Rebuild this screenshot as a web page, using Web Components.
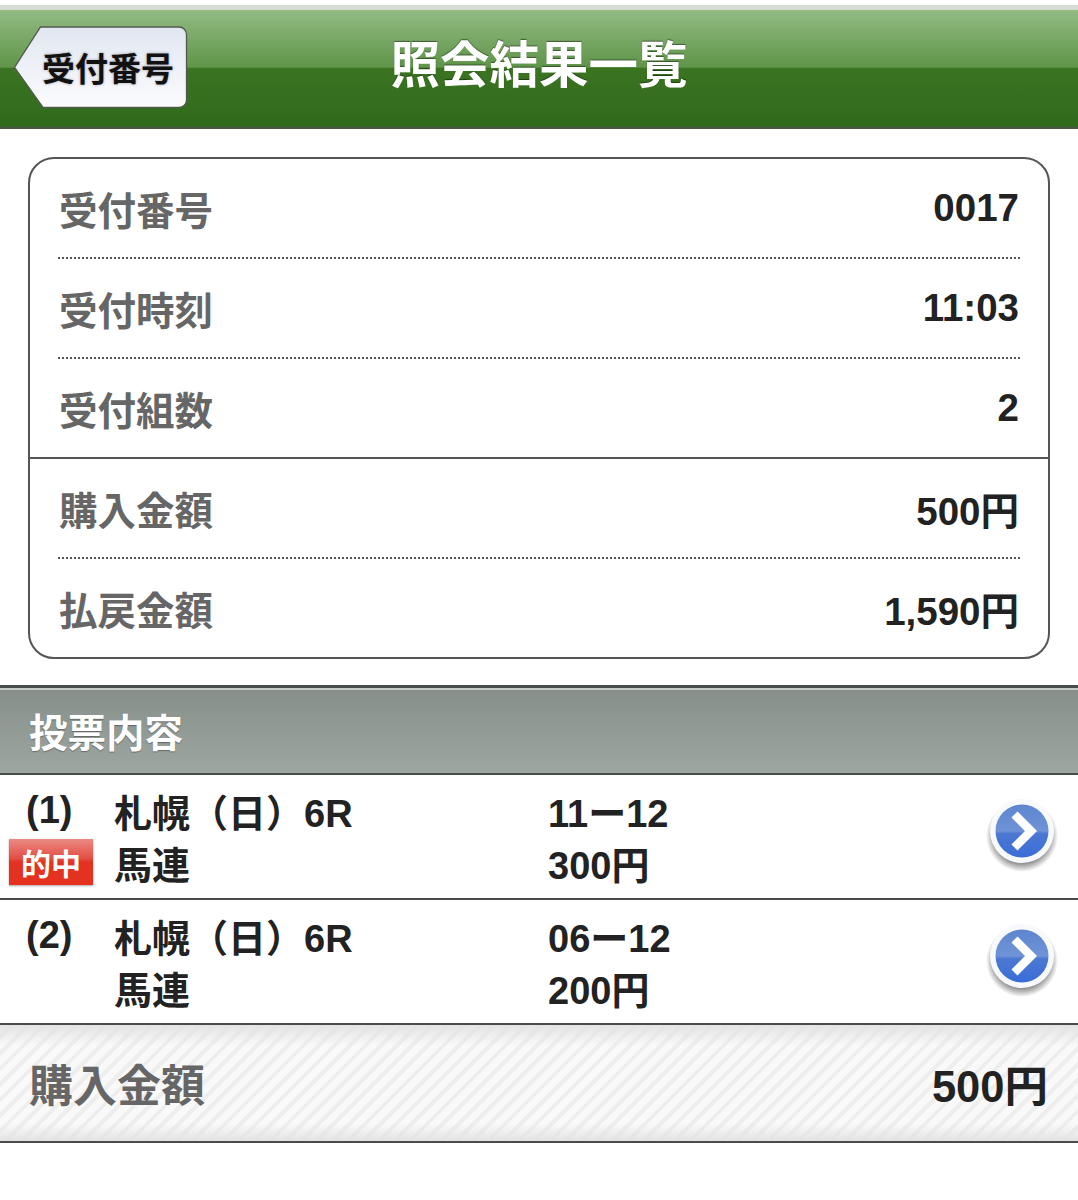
<!DOCTYPE html>
<html lang="ja">
<head>
<meta charset="utf-8">
<title>照会結果一覧</title>
<style>
    html, body { margin: 0; background: #fff; }
    body {
        font-family: "Liberation Sans", "Noto Sans CJK JP", sans-serif;
        font-weight: 700;
    }
</style>
</head>
<body>
<nav-bar back="受付番号">照会結果一覧</nav-bar>
<info-card>
    <info-row label="受付番号" sep="dot">0017</info-row>
    <info-row label="受付時刻" sep="dot">11:03</info-row>
    <info-row label="受付組数" sep="solid">2</info-row>
    <info-row label="購入金額" sep="dot">500円</info-row>
    <info-row label="払戻金額">1,590円</info-row>
</info-card>
<section-title>投票内容</section-title>
<ticket-row num="(1)" place="札幌（日）6R" kind="馬連" combo="11ー12" amount="300円" hit></ticket-row>
<ticket-row num="(2)" place="札幌（日）6R" kind="馬連" combo="06ー12" amount="200円"></ticket-row>
<total-bar label="購入金額">500円</total-bar>

<script>
class NavBar extends HTMLElement {
    constructor() {
        super();
        this.shadow = this.attachShadow({ mode: "open" });
    }
    connectedCallback() {
        this.shadow.innerHTML = /*html*/`
        <style>
            :host { display: block; padding-top: 5px; }
            .top { height: 5px; background: #d5dcd3; }
            .bar {
                position: relative;
                height: 117px;
                display: flex;
                align-items: center;
                justify-content: center;
                border-bottom: 2px solid #4a5547;
                background: linear-gradient(#93bb84 0, #5f9549 49%, #3b7421 49.5%, #2f6a1c 100%);
            }
            h1 {
                margin: 0 0 5px;
                font-size: 49.5px;
                line-height: 60px;
                color: #fff;
                text-shadow: 0 -1px 1px rgba(0,0,0,.45);
            }
            .back {
                position: absolute;
                left: 13px;
                top: 16px;
                width: 175px;
                height: 83px;
                display: flex;
                align-items: center;
                padding-left: 29px;
                box-sizing: border-box;
                font-size: 33px;
                color: #111;
            }
            .back svg { position: absolute; left: 0; top: 0; }
            .back span { position: relative; margin-bottom: 1px; text-shadow: 0 0 3px rgba(0,0,0,.35); }
        </style>
        <div class="top"></div>
        <div class="bar">
            <div class="back">
                <svg width="175" height="83" viewBox="0 0 175 83">
                    <defs>
                        <linearGradient id="bk" x1="0" y1="0" x2="0" y2="1">
                            <stop offset="0" stop-color="#e1e6f0"/>
                            <stop offset="1" stop-color="#fbfcfe"/>
                        </linearGradient>
                    </defs>
                    <path d="M27.500 1 H166 a7.500 7.500 0 0 1 7.500 7.500 V74 a7.500 7.500 0 0 1 -7.500 7.500 H30 L1.500 41.500 Z"
                          fill="url(#bk)" stroke="#4f5a4c" stroke-width="1.300"/>
                </svg>
                <span>${this.getAttribute("back")}</span>
            </div>
            <h1><slot></slot></h1>
        </div>`;
    }
}

class InfoCard extends HTMLElement {
    constructor() {
        super();
        this.shadow = this.attachShadow({ mode: "open" });
    }
    connectedCallback() {
        this.shadow.innerHTML = /*html*/`
        <style>
            :host {
                display: block;
                margin: 28px 28px 26px;
                border: 2px solid #555;
                border-radius: 26px;
                background: #fff;
            }
        </style>
        <slot></slot>`;
    }
}

class InfoRow extends HTMLElement {
    constructor() {
        super();
        this.shadow = this.attachShadow({ mode: "open" });
    }
    connectedCallback() {
        const sep = this.getAttribute("sep");
        this.shadow.innerHTML = /*html*/`
        <style>
            :host { display: block; }
            .row {
                height: 98px;
                display: flex;
                align-items: center;
                justify-content: space-between;
                padding: 0 29px;
            }
            .label { font-size: 38.500px; color: #666; }
            .value { font-size: 38.500px; color: #222; }
            .sep { height: 2px; }
            .dot { margin: 0 28px; background: repeating-linear-gradient(90deg, #555 0 2px, transparent 2px 4px); }
            .solid { background: #555; }
        </style>
        <div class="row">
            <span class="label">${this.getAttribute("label")}</span>
            <span class="value"><slot></slot></span>
        </div>
        ${sep ? `<div class="sep ${sep}"></div>` : ""}`;
    }
}

class SectionTitle extends HTMLElement {
    constructor() {
        super();
        this.shadow = this.attachShadow({ mode: "open" });
    }
    connectedCallback() {
        this.shadow.innerHTML = /*html*/`
        <style>
            :host {
                display: flex;
                align-items: center;
                box-sizing: border-box;
                height: 90px;
                padding: 0 29px 1px;
                border-top: 3px solid #484c4a;
                border-bottom: 2px solid #484c4a;
                box-shadow: inset 0 2px 0 #c4cac6;
                background: linear-gradient(#878f8b, #9da6a1);
                font-size: 38.500px;
                color: #fff;
                text-shadow: 0 1px 1px rgba(60,60,60,.55);
            }
        </style>
        <slot></slot>`;
    }
}

class TicketRow extends HTMLElement {
    constructor() {
        super();
        this.shadow = this.attachShadow({ mode: "open" });
    }
    connectedCallback() {
        const badge = this.hasAttribute("hit") ? `<span class="badge">的中</span>` : "";
        this.shadow.innerHTML = /*html*/`
        <style>
            :host {
                display: grid;
                grid-template-columns: 114px 434px 1fr 90px;
                grid-template-rows: 52px 52px;
                align-items: center;
                box-sizing: border-box;
                height: 125px;
                padding-top: 9px;
                border-bottom: 2px solid #484c4a;
                font-size: 38px;
                color: #222;
            }
            .num { padding-left: 26px; }
            .badge {
                justify-self: start;
                margin-left: 9px;
                width: 84px;
                height: 46px;
                display: flex;
                align-items: center;
                justify-content: center;
                font-size: 30px;
                color: #fff;
                background: linear-gradient(#ea8a84 0, #e44f44 42%, #e23222 50%, #e5321f 100%);
                box-shadow: 0 1px 2px rgba(0,0,0,.35);
            }
            .go { grid-column: 4; grid-row: 1 / 3; justify-self: start; margin-left: -4px; margin-top: -8px; display: block; }
        </style>
        <span class="num">${this.getAttribute("num")}</span>
        <span>${this.getAttribute("place")}</span>
        <span>${this.getAttribute("combo")}</span>
        <svg class="go" width="76" height="84" viewBox="0 0 76 84">
            <defs>
                <radialGradient id="sh" cx=".5" cy=".5" r=".5">
                    <stop offset=".75" stop-color="#000" stop-opacity=".45"/>
                    <stop offset="1" stop-color="#000" stop-opacity="0"/>
                </radialGradient>
                <linearGradient id="bl" x1="0" y1="0" x2="0" y2="1">
                    <stop offset="0" stop-color="#5d86cf"/>
                    <stop offset=".5" stop-color="#6f93d6"/>
                    <stop offset=".55" stop-color="#4c78d2"/>
                    <stop offset="1" stop-color="#3a6dd8"/>
                </linearGradient>
            </defs>
            <circle cx="38" cy="46" r="36" fill="url(#sh)"/>
            <circle cx="38" cy="41" r="32" fill="#f8f9fc"/>
            <circle cx="38" cy="41" r="26.500" fill="url(#bl)"/>
            <path d="M30.500 24.500 L47 41 L30.500 57.500" fill="none" stroke="#fff" stroke-width="8.500"/>
        </svg>
        ${badge || "<span></span>"}
        <span>${this.getAttribute("kind")}</span>
        <span>${this.getAttribute("amount")}</span>`;
    }
}

class TotalBar extends HTMLElement {
    constructor() {
        super();
        this.shadow = this.attachShadow({ mode: "open" });
    }
    connectedCallback() {
        this.shadow.innerHTML = /*html*/`
        <style>
            :host {
                display: flex;
                align-items: center;
                justify-content: space-between;
                box-sizing: border-box;
                height: 118px;
                padding: 0 30px 0 29px;
                border-bottom: 2px solid #484c4a;
                background:
                    linear-gradient(rgba(225,225,225,.9), rgba(255,255,255,0) 18%, rgba(255,255,255,0) 85%, rgba(225,225,225,.9)),
                    repeating-linear-gradient(135deg, #f9f9f9 0 7px, #eeeeee 7px 11px);
                font-size: 44px;
            }
            .label { color: #666; }
            .value { font-size: 43.500px; color: #222; }
        </style>
        <span class="label">${this.getAttribute("label")}</span>
        <span class="value"><slot></slot></span>`;
    }
}

customElements.define("nav-bar", NavBar);
customElements.define("info-card", InfoCard);
customElements.define("info-row", InfoRow);
customElements.define("section-title", SectionTitle);
customElements.define("ticket-row", TicketRow);
customElements.define("total-bar", TotalBar);
</script>
</body>
</html>
